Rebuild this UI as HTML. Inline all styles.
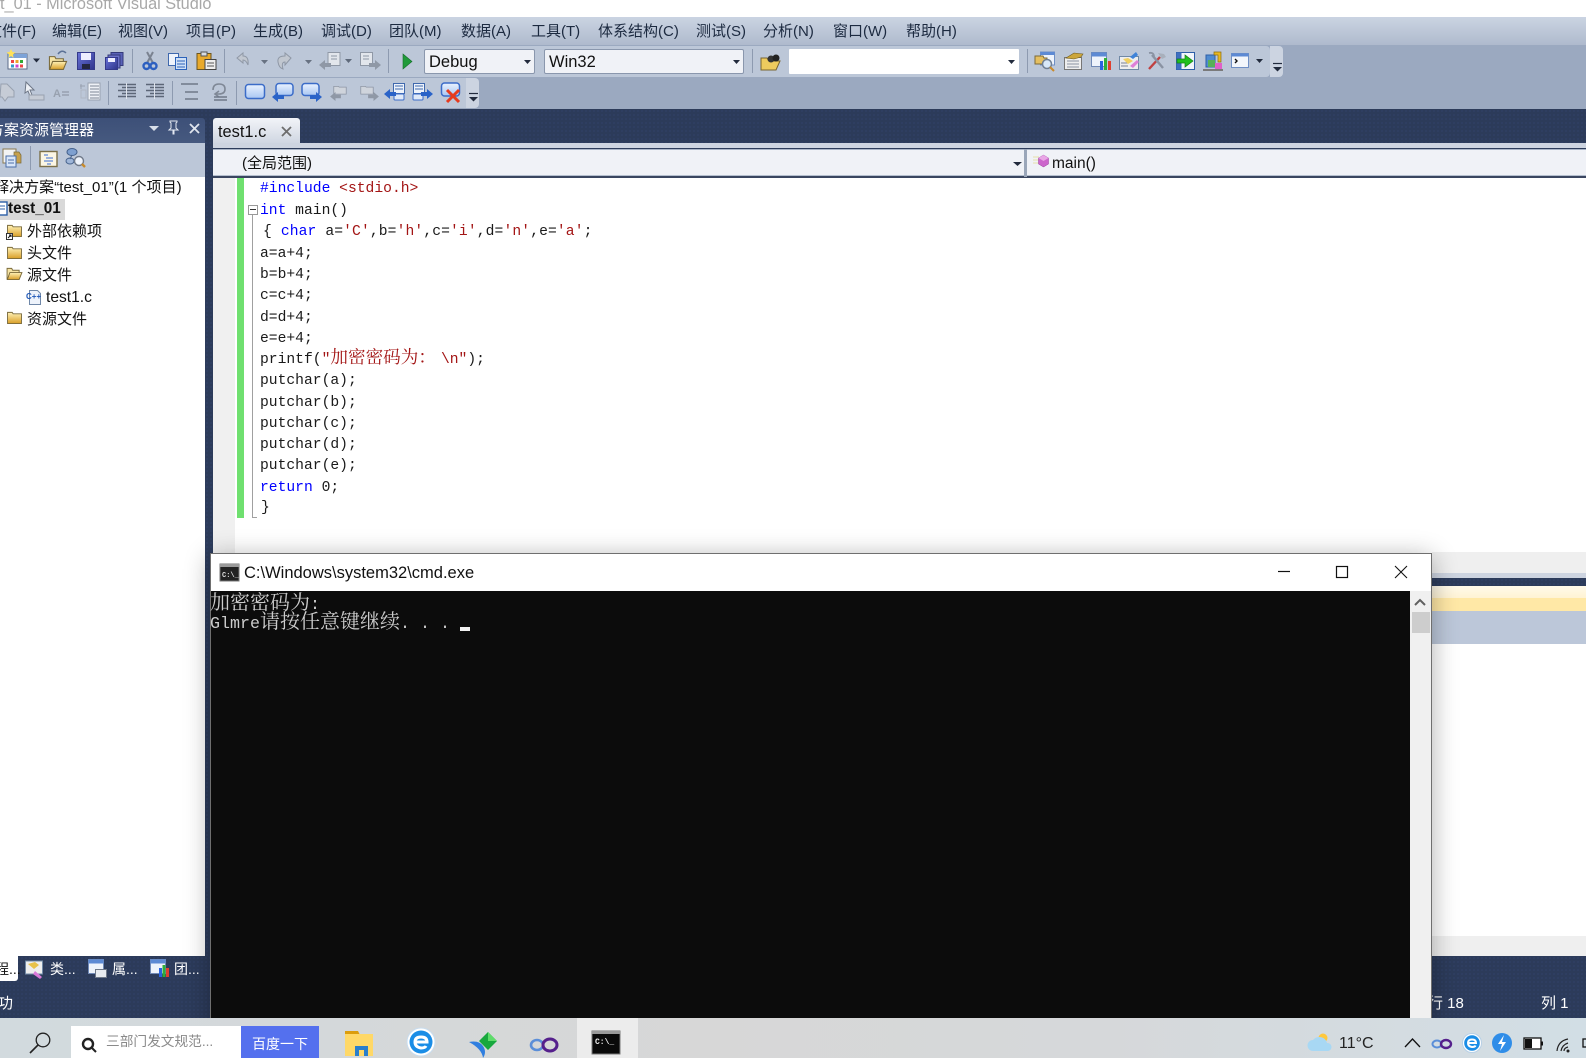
<!DOCTYPE html>
<html><head><meta charset="utf-8"><title>cmd</title>
<style>
html,body{margin:0;padding:0;width:1586px;height:1058px;overflow:hidden;background:#fff}
body{position:relative;font-family:"Liberation Sans","Noto Sans CJK SC",sans-serif}
.b{position:absolute}
.t{position:absolute;white-space:nowrap;line-height:20px;height:20px;font-size:15px;color:#111}
.m{color:#1c2a40;top:22px}
.c{position:absolute;left:260px;white-space:pre;height:21px;line-height:21px;font-family:"Liberation Mono","Noto Serif CJK SC",monospace;font-size:14.67px;color:#1a1a1a}
.c i{font-style:normal;color:#0000ff}
.c u{text-decoration:none;color:#a31515}
.c u b{font-weight:400;font-size:17.6px;font-family:"Noto Serif CJK SC",serif}
.dark{background-color:#2c3b5a;background-image:radial-gradient(#2f3f62 35%,transparent 40%);background-size:4px 4px}
svg{position:absolute;left:0;top:0}
</style></head><body>

<!-- title -->
<div class="t" style="left:0;top:-6px;font-size:16.3px;color:#a8a8a8">t_01 - Microsoft Visual Studio</div>

<!-- menu -->
<div class="b" style="left:0;top:17px;width:1586px;height:28px;background:linear-gradient(#cbd4e2,#afbacd)"></div>
<div class="t m" style="left:-13px">文件(F)</div>
<div class="t m" style="left:52px">编辑(E)</div>
<div class="t m" style="left:118px">视图(V)</div>
<div class="t m" style="left:186px">项目(P)</div>
<div class="t m" style="left:253px">生成(B)</div>
<div class="t m" style="left:321px">调试(D)</div>
<div class="t m" style="left:389px">团队(M)</div>
<div class="t m" style="left:461px">数据(A)</div>
<div class="t m" style="left:531px">工具(T)</div>
<div class="t m" style="left:598px">体系结构(C)</div>
<div class="t m" style="left:696px">测试(S)</div>
<div class="t m" style="left:763px">分析(N)</div>
<div class="t m" style="left:833px">窗口(W)</div>
<div class="t m" style="left:906px">帮助(H)</div>

<!-- toolbars -->
<div class="b" style="left:0;top:45px;width:1586px;height:64px;background:#9ba9c0"></div>
<div class="b" style="left:0;top:46px;width:1270px;height:31px;background:#bcc7d8;border-radius:0 4px 4px 0"></div>
<div class="b" style="left:1270px;top:46px;width:13px;height:31px;background:#ccd4e1;border-radius:0 4px 4px 0"></div>
<div class="b" style="left:0;top:78px;width:466px;height:30px;background:#bcc7d8"></div>
<div class="b" style="left:466px;top:78px;width:13px;height:30px;background:#ccd4e1;border-radius:0 4px 4px 0"></div>

<!-- combos -->
<div class="b" style="left:424px;top:49px;width:111px;height:25px;background:#f0f2f7;box-sizing:border-box;border:1px solid #8a97ad;border-radius:2px"></div>
<div class="t" style="left:429px;top:52px;font-size:16.5px">Debug</div>
<div class="b" style="left:544px;top:49px;width:200px;height:25px;background:#f0f2f7;box-sizing:border-box;border:1px solid #8a97ad;border-radius:2px"></div>
<div class="t" style="left:549px;top:52px;font-size:16.5px">Win32</div>
<div class="b" style="left:789px;top:49px;width:230px;height:25px;background:#fff;border-radius:1px"></div>

<!-- dark band -->
<div class="b dark" style="left:0;top:109px;width:1586px;height:36px"></div>
<div class="b dark" style="left:205px;top:145px;width:8px;height:811px"></div>

<!-- solution explorer -->
<div class="b" style="left:0;top:118px;width:205px;height:25px;background:linear-gradient(#3d5078,#46597f);border-radius:0 3px 0 0"></div>
<div class="t" style="left:-11px;top:121px;color:#fff;font-size:15px">方案资源管理器</div>
<div class="b" style="left:0;top:143px;width:205px;height:34px;background:#bcc7d8"></div>
<div class="b" style="left:0;top:177px;width:205px;height:779px;background:#fff"></div>
<div class="b" style="left:0;top:199px;width:65px;height:21px;background:#d9d9d9"></div>
<div class="t" style="left:-6px;top:178px;letter-spacing:.05px">释决方案“test_01”(1 个项目)</div>
<div class="t" style="left:8px;top:199px;font-weight:700;font-size:15.3px">test_01</div>
<div class="t" style="left:27px;top:222px">外部依赖项</div>
<div class="t" style="left:27px;top:244px">头文件</div>
<div class="t" style="left:27px;top:266px">源文件</div>
<div class="t" style="left:46px;top:288px;font-size:15.6px">test1.c</div>
<div class="t" style="left:27px;top:310px">资源文件</div>

<!-- bottom tabs / status -->
<div class="b dark" style="left:0;top:956px;width:1586px;height:62px"></div>
<div class="b" style="left:0;top:956px;width:18px;height:25px;background:#fff;border-radius:0 0 3px 0"></div>
<div class="t" style="left:-5px;top:959px;font-size:14px">程...</div>
<div class="t" style="left:50px;top:959px;font-size:14px;color:#fff">类...</div>
<div class="t" style="left:112px;top:959px;font-size:14px;color:#fff">属...</div>
<div class="t" style="left:174px;top:959px;font-size:14px;color:#fff">团...</div>
<div class="t" style="left:-2px;top:994px;color:#fff">功</div>
<div class="t" style="left:1428px;top:994px;color:#fff">行 18</div>
<div class="t" style="left:1541px;top:994px;color:#fff">列 1</div>

<!-- doc tab -->
<div class="b" style="left:213px;top:118px;width:87px;height:27px;background:linear-gradient(#f2f4f8,#cdd4e0);border-radius:3px 3px 0 0"></div>
<div class="t" style="left:218px;top:122px;font-size:16.4px">test1.c</div>
<div class="b" style="left:213px;top:143px;width:1373px;height:5px;background:#cdd4e0"></div>
<div class="b" style="left:213px;top:148px;width:1373px;height:30px;background:#f0f2f7;box-sizing:border-box;border-top:1px solid #2c3b5a;border-bottom:2px solid #3a4660;box-shadow:inset 0 1px 0 #a9b4c6,inset 0 -1px 0 #b5bfce"></div>
<div class="b" style="left:1024px;top:149px;width:3px;height:28px;background:#9aa6b9"></div>
<div class="t" style="left:242px;top:154px;font-size:15px">(全局范围)</div>
<div class="t" style="left:1052px;top:154px;font-size:15.5px">main()</div>

<!-- editor -->
<div class="b" style="left:213px;top:178px;width:1373px;height:374px;background:#fff"></div>
<div class="b" style="left:213px;top:178px;width:22px;height:420px;background:#f0f0f0"></div>
<div class="b" style="left:237px;top:178px;width:7px;height:340px;background:#6fe06f"></div>
<div class="b" style="left:248px;top:205px;width:8px;height:8px;border:1px solid #999;background:#fff"></div>
<div class="b" style="left:250px;top:209px;width:6px;height:1px;background:#333"></div>
<div class="b" style="left:252px;top:215px;width:1px;height:302px;background:#a0a0a0"></div>
<div class="b" style="left:252px;top:517px;width:5px;height:1px;background:#a0a0a0"></div>

<div class="c" style="top:179px;left:260px"><i>#include</i> <u>&lt;stdio.h&gt;</u></div>
<div class="c" style="top:201px;left:260px"><i>int</i> main()</div>
<div class="c" style="top:222px;left:263px;letter-spacing:.11px">{ <i>char</i> a=<u>'C'</u>,b=<u>'h'</u>,c=<u>'i'</u>,d=<u>'n'</u>,e=<u>'a'</u>;</div>
<div class="c" style="top:244px">a=a+4;</div>
<div class="c" style="top:265px">b=b+4;</div>
<div class="c" style="top:286px">c=c+4;</div>
<div class="c" style="top:308px">d=d+4;</div>
<div class="c" style="top:329px">e=e+4;</div>
<div class="c" style="top:346px">printf(<u>"<b>加密密码为：</b><span style="padding-left:5px">\n</span>"</u>);</div>
<div class="c" style="top:371px">putchar(a);</div>
<div class="c" style="top:393px">putchar(b);</div>
<div class="c" style="top:414px">putchar(c);</div>
<div class="c" style="top:435px">putchar(d);</div>
<div class="c" style="top:456px">putchar(e);</div>
<div class="c" style="top:478px"><i>return</i> 0;</div>
<div class="c" style="top:498px;left:261px">}</div>

<!-- right of console -->
<div class="b" style="left:1432px;top:552px;width:154px;height:21px;background:#efefef"></div>
<div class="b" style="left:1432px;top:573px;width:154px;height:5px;background:#cdd4e0"></div>
<div class="b dark" style="left:1432px;top:578px;width:154px;height:8px"></div>
<div class="b" style="left:1432px;top:586px;width:154px;height:12px;background:linear-gradient(#fffaea,#fff3d4)"></div>
<div class="b" style="left:1432px;top:598px;width:154px;height:13px;background:#ffe8a6"></div>
<div class="b" style="left:1432px;top:611px;width:154px;height:33px;background:#bcc7d9"></div>
<div class="b" style="left:1432px;top:936px;width:154px;height:20px;background:#efefef"></div>

<!-- VS icons -->
<svg width="1586" height="1058" viewBox="0 0 1586 1058">
<defs>
<linearGradient id="gold" x1="0" y1="0" x2="0" y2="1"><stop offset="0" stop-color="#fff2b8"/><stop offset="1" stop-color="#d99f28"/></linearGradient>
<linearGradient id="blu" x1="0" y1="0" x2="0" y2="1"><stop offset="0" stop-color="#eaf2ff"/><stop offset="1" stop-color="#a9c6f2"/></linearGradient>
<linearGradient id="sav" x1="0" y1="0" x2="1" y2="1"><stop offset="0" stop-color="#6a74d8"/><stop offset="1" stop-color="#2e348c"/></linearGradient>
<symbol id="tri" viewBox="0 0 7 4" overflow="visible"><path d="M0 0h7L3.5 4z" fill="#222b3d"/></symbol>
<symbol id="fd" viewBox="0 0 16 14" overflow="visible"><path d="M.5 1.500h5l1 1.500h9v10.500H.5z" fill="url(#gold)" stroke="#7a6a3a"/></symbol>
<symbol id="fo" viewBox="0 0 17 14" overflow="visible"><path d="M.5 1.500h5l1 2h7v3H4L1 13H.5z" fill="#f6e4a4" stroke="#7a6a3a"/><path d="M3.500 6h13l-3 7.500H.8z" fill="url(#gold)" stroke="#7a6a3a"/></symbol>
<symbol id="gbub" viewBox="0 0 20 18" overflow="visible"><path d="M2 3h6l1 1h9v9H2z" fill="#cfd4dc" stroke="#8d95a3"/></symbol>
<symbol id="lar" viewBox="0 0 12 10" overflow="visible"><path d="M0 5l6-5v3h6v4H6v3z" fill="#2a63c8"/></symbol>
<symbol id="rar" viewBox="0 0 12 10" overflow="visible"><path d="M12 5L6 0v3H0v4h6v3z" fill="#2a63c8"/></symbol>
<symbol id="glar" viewBox="0 0 12 10" overflow="visible"><path d="M0 5l6-5v3h6v4H6v3z" fill="#8f98a6"/></symbol>
<symbol id="grar" viewBox="0 0 12 10" overflow="visible"><path d="M12 5L6 0v3H0v4h6v3z" fill="#8f98a6"/></symbol>
<symbol id="lines" viewBox="0 0 20 16" overflow="visible"><path d="M1 1.500h18M5 4.500h14M1 7.500h18M5 10.500h14M1 13.500h18" stroke="#5c6677" stroke-width="1.600" fill="none"/><path d="M9.500 0v16" stroke="#dfe4ec" stroke-width="1"/></symbol>
<symbol id="ovf" viewBox="0 0 9 9" overflow="visible"><path d="M0 .5h9" stroke="#222b3d" stroke-width="1.200"/><path d="M0 4h9L4.500 8.500z" fill="#222b3d"/></symbol>
</defs>

<!-- row 1 -->
<g>
<rect x="8" y="54" width="19" height="15" fill="#fff" stroke="#5b6b88"/><rect x="8" y="54" width="19" height="4" fill="#7da3d8"/>
<rect x="11" y="60" width="3" height="3" fill="#e44"/><rect x="15.500" y="60" width="3" height="3" fill="#e9a427"/><rect x="20" y="60" width="3" height="3" fill="#3a3"/><rect x="11" y="64.500" width="3" height="3" fill="#39c"/><rect x="15.500" y="64.500" width="3" height="3" fill="#c4c"/><rect x="20" y="64.500" width="3" height="3" fill="#e44"/>
<path d="M11 49l1.500 3 3 .5-2.500 2 .5 3.500-2.500-2-2.500 2 .5-3.500-2.500-2 3-.5z" fill="#ffe15a"/>
<use href="#tri" x="33" y="58.500" width="7" height="4"/>
<use href="#fo" x="48" y="55" width="20" height="15"/><path d="M58 54q4-5 8-1" stroke="#5b7196" stroke-width="1.500" fill="none"/>
<rect x="77.500" y="52.500" width="17" height="17" fill="url(#sav)" stroke="#343a8a"/><rect x="81" y="53" width="10" height="7" fill="#eef"/><rect x="82" y="64" width="8" height="5" fill="#23263f"/>
<rect x="111" y="52.500" width="12" height="13" fill="#5a62b8" stroke="#343a7a"/><rect x="108" y="55" width="12" height="13" fill="#6a70c8" stroke="#343a7a"/><rect x="105.500" y="57.500" width="12" height="12" fill="url(#sav)" stroke="#343a8a"/><rect x="108" y="58" width="7" height="4" fill="#eef"/>
<rect x="132" y="49" width="1" height="24" fill="#8d9ab0"/>
<path d="M147 52l6 11M153 52l-6 11" stroke="#7a8290" stroke-width="2"/><circle cx="146.500" cy="66" r="3" fill="none" stroke="#2c5fc0" stroke-width="2.400"/><circle cx="153.500" cy="66" r="3" fill="none" stroke="#2c5fc0" stroke-width="2.400"/>
<rect x="168.500" y="53.500" width="10" height="12" fill="#eef3fb" stroke="#3f68ad"/><rect x="175.500" y="57.500" width="11" height="12" fill="#cfe0f6" stroke="#2b62ba"/><path d="M177 61h8M177 64h8M177 67h8" stroke="#2b62ba"/>
<rect x="197" y="53.500" width="14" height="16" fill="#e8a92b" stroke="#6b5520"/><rect x="201" y="52" width="6" height="4" fill="#d8dce4" stroke="#555"/><rect x="205" y="59.500" width="11" height="10" fill="#eee" stroke="#444"/><path d="M207 63h7M207 66h7" stroke="#555"/>
<rect x="224" y="49" width="1" height="24" fill="#8d9ab0"/>
<path d="M237 58l6-5v3q6 0 5 9-2-5-5-5v3z" fill="#c1c7d0" stroke="#8f98a6"/><use href="#tri" x="261" y="60" width="7" height="4" opacity=".55"/>
<path d="M291 58l-6-5v3q-8 0-7 6t5 7q-2-7 2-7v3z" fill="#c1c7d0" stroke="#8f98a6"/><use href="#tri" x="305" y="60" width="7" height="4" opacity=".55"/>
<rect x="328" y="52.500" width="12" height="13" fill="#e2e6ec" stroke="#8f98a6"/><path d="M331 56h6M331 59h6" stroke="#8f98a6"/><use href="#glar" x="319" y="60" width="12" height="10"/><use href="#tri" x="345" y="59" width="7" height="4" opacity=".6"/>
<rect x="360.500" y="52.500" width="12" height="13" fill="#e2e6ec" stroke="#8f98a6"/><path d="M363 56h6M363 59h6" stroke="#8f98a6"/><use href="#grar" x="369" y="60" width="12" height="10"/>
<rect x="388" y="49" width="1" height="24" fill="#8d9ab0"/>
<path d="M403 54l9 7.500-9 7.500z" fill="#1f9a3a" stroke="#146d2a" stroke-width=".6"/>
<use href="#tri" x="524" y="60" width="7" height="4"/><use href="#tri" x="733" y="60" width="7" height="4"/><use href="#tri" x="1008" y="60" width="7" height="4"/>
<rect x="752" y="49" width="1" height="24" fill="#8d9ab0"/>
<path d="M761 58h6l2 3h11l-4 9h-15z" fill="#eecb5e" stroke="#786430"/><circle cx="771" cy="59" r="3.500" fill="#333"/><circle cx="776" cy="58" r="3.500" fill="#222"/>
<rect x="1027" y="49" width="1" height="24" fill="#8d9ab0"/>
<rect x="1040.500" y="52" width="14" height="13" fill="#eef3fb" stroke="#6f8fc4"/><rect x="1040.500" y="52" width="14" height="3" fill="#5d8ad4"/><path d="M1035 56h8l1 2h3v6h-12z" fill="#e5bf60" stroke="#7a6a3a"/><circle cx="1047" cy="64" r="4.500" fill="#d8e8f8" stroke="#6f7f94" stroke-width="1.500"/><path d="M1050 67l4 4" stroke="#c98a2a" stroke-width="2"/>
<rect x="1064.500" y="57.500" width="17" height="12" fill="#eee" stroke="#777"/><path d="M1067 61h12M1067 64h12M1067 67h12" stroke="#8a93a3"/><path d="M1066 58l8-5 9 1-2 3-7 2z" fill="#cca63c" stroke="#6d5a20" stroke-width=".6"/>
<rect x="1091.500" y="52.500" width="15" height="14" fill="#eef3fb" stroke="#7089b6"/><rect x="1091.500" y="52.500" width="15" height="4" fill="#5d8ad4"/><rect x="1100" y="61" width="3" height="9" fill="#2a63e0"/><rect x="1104" y="58" width="3" height="12" fill="#2fae3a"/><rect x="1108" y="61" width="3" height="9" fill="#e04030"/>
<rect x="1119.500" y="56.500" width="19" height="13" fill="#eee" stroke="#7089a6"/><path d="M1121 63h7M1121 66h7" stroke="#7a8394"/><path d="M1123 59l5 5 5-3-5-3z" fill="#f0cf60"/><path d="M1130 66l7-6 2 2-6 6z" fill="#e080d8"/><path d="M1130 57l6-5 2 3-5 4z" fill="#3f83d8"/>
<path d="M1149 69l11-12" stroke="#c04040" stroke-width="2.400"/><path d="M1152 55l11 13" stroke="#8a93a3" stroke-width="2.400"/><path d="M1149 53q5-1 5 4" stroke="#8a93a3" stroke-width="1.800" fill="none"/><path d="M1158 53l6 1 2 3-4 2z" fill="#a8b0bc"/>
<rect x="1176.500" y="52.500" width="18" height="17" fill="#f3f6fb" stroke="#2e5fa8"/><rect x="1176.500" y="52.500" width="5" height="17" fill="#3f6fc0"/><path d="M1177 59h8v-4l8 6-8 6v-4h-8z" fill="#22c01e" stroke="#147f14" stroke-width=".7"/>
<rect x="1203" y="69" width="20" height="2" fill="#7a7a7a"/><rect x="1206" y="55" width="9" height="12" fill="#4f8bd0" stroke="#2e5fa8"/><rect x="1208" y="60" width="7" height="7" fill="#58b058"/><path d="M1214 52h7v10h-3v-7h-4z" fill="#e8b820" stroke="#8a6c10" stroke-width=".7"/><rect x="1215" y="63" width="7" height="6" fill="#e060c8"/>
<rect x="1231.500" y="53.500" width="17" height="14" fill="#f3f6fb" stroke="#6f8fc4"/><rect x="1231.500" y="53.500" width="17" height="3" fill="#5d8ad4"/><path d="M1235 59l2 2-2 2" stroke="#111" stroke-width="1.400" fill="none"/>
<use href="#tri" x="1256" y="59" width="7" height="4"/><use href="#ovf" x="1273" y="63" width="9" height="9"/>
</g>

<!-- row 2 -->
<g>
<path d="M1 84h6l7 7v6H8l-3 4-3-4H0z" fill="#c6ccd6" stroke="#98a1af"/>
<path d="M26 82l8 8h-4l2 5-2 1-2-5-3 2z" fill="#eef1f6" stroke="#6d7686"/><rect x="29" y="95" width="15" height="5" fill="#c6ccd6" stroke="#98a1af"/>
<text x="53" y="97" font-family="Liberation Sans" font-size="11" font-weight="700" fill="#98a1af">A</text><path d="M62 92h7M62 95h7" stroke="#98a1af" stroke-width="1.500"/>
<path d="M81 84v5M80 86h5" stroke="#98a1af"/><rect x="88" y="83" width="12" height="17" fill="#eef1f6" stroke="#98a1af"/><path d="M90 86h9M90 89h9M90 92h9M90 95h9M90 98h9" stroke="#7f8896"/><rect x="81" y="90" width="5" height="8" fill="none" stroke="#b0b7c3"/>
<rect x="108" y="81" width="1" height="24" fill="#8d9ab0"/>
<use href="#lines" x="117" y="83" width="20" height="16"/><use href="#lines" x="145" y="83" width="20" height="16"/>
<rect x="172" y="81" width="1" height="24" fill="#8d9ab0"/>
<path d="M181 84h17M185 92h13M185 99h13" stroke="#6f7888" stroke-width="1.600"/>
<path d="M213 90q0-6 6-6t6 5-6 5h-3m3-3l-4 3 4 3" stroke="#7f8896" stroke-width="1.600" fill="none"/><path d="M214 97h13M214 100h13" stroke="#6f7888" stroke-width="1.400"/>
<rect x="236" y="81" width="1" height="24" fill="#8d9ab0"/>
<rect x="245.500" y="84.500" width="19" height="14" rx="3" fill="url(#blu)" stroke="#3b6cc8" stroke-width="1.500"/>
<rect x="276" y="83.500" width="17" height="12" rx="3" fill="url(#blu)" stroke="#3b6cc8" stroke-width="1.500"/><use href="#lar" x="272" y="92" width="12" height="10"/>
<rect x="302" y="83.500" width="17" height="12" rx="3" fill="url(#blu)" stroke="#3b6cc8" stroke-width="1.500"/><use href="#rar" x="310" y="92" width="12" height="10"/>
<use href="#gbub" x="331" y="84" width="18" height="14"/><use href="#glar" x="330" y="92" width="11" height="9"/>
<use href="#gbub" x="358" y="84" width="18" height="14"/><use href="#grar" x="368" y="92" width="11" height="9"/>
<rect x="393.500" y="83.500" width="11" height="10" fill="#eef3fb" stroke="#3f68ad"/><path d="M395 86h8M395 89h8" stroke="#3f68ad"/><rect x="394" y="94" width="10" height="6" rx="1" fill="#dfe9f8" stroke="#3b6cc8"/><use href="#lar" x="384" y="89" width="12" height="10"/>
<rect x="413.500" y="83.500" width="11" height="10" fill="#eef3fb" stroke="#3f68ad"/><path d="M415 86h8M415 89h8" stroke="#3f68ad"/><rect x="413" y="94" width="10" height="6" rx="1" fill="#dfe9f8" stroke="#3b6cc8"/><use href="#rar" x="421" y="89" width="12" height="10"/>
<rect x="441.500" y="83" width="18" height="13" rx="3" fill="url(#blu)" stroke="#3b6cc8" stroke-width="1.500"/><path d="M447 90l12 12M459 90l-12 12" stroke="#e63b1e" stroke-width="3"/>
<use href="#ovf" x="469" y="93" width="9" height="9"/>
</g>

<!-- explorer header + toolbar -->
<path d="M149 126h10l-5 5z" fill="#d8dfea"/>
<path d="M170 121h7v1l-1 1v5l2 2h-4v4h-1v-4h-4l2-2v-5l-1-1z" fill="none" stroke="#e4e9f2"/>
<path d="M190 124l9 9M199 124l-9 9" stroke="#dfe5ee" stroke-width="1.800"/>
<g>
<rect x="3" y="149" width="13" height="14" fill="#f3f3f3" stroke="#8a7a50"/><path d="M14 152h5l2 3v8h-7z" fill="#c6a04c" stroke="#7a6a3a" stroke-width=".7"/><rect x="6" y="156" width="10" height="11" fill="#d9e6f8" stroke="#4a6ea8"/><path d="M8 160h6M8 163h6" stroke="#4a6ea8"/>
<rect x="30" y="146" width="1" height="24" fill="#8d9ab0"/>
<rect x="40" y="151.500" width="17" height="15" fill="#fbf6e4" stroke="#7b6f48" stroke-width="1.400"/><path d="M44 155h4M46 158h7M44 161h9M47 164h4" stroke="#3b6cd0"/>
<ellipse cx="72" cy="152" rx="5" ry="3.500" fill="#7ea0d0" stroke="#46628c"/><ellipse cx="70" cy="161" rx="4" ry="3" fill="#9fb6d8" stroke="#46628c"/><path d="M72 155l-2 4" stroke="#46628c"/><circle cx="79" cy="161" r="4.500" fill="#eef3fb" stroke="#707a8a" stroke-width="1.400"/><path d="M82 164l3 3" stroke="#c98a2a" stroke-width="2.400"/>
</g>
<!-- tree icons -->
<rect x="-2" y="202" width="9" height="13" fill="#fff" stroke="#2c5fa8" stroke-width="1.400"/><path d="M0 206h5M0 209h5" stroke="#2c5fa8"/>
<use href="#fd" x="7" y="224" width="15" height="13"/><rect x="6.500" y="233.500" width="6" height="6" fill="#fff" stroke="#333"/><path d="M8 238l3-3M9 235h2v2" stroke="#111" fill="none"/>
<use href="#fd" x="7" y="246" width="15" height="13"/>
<use href="#fo" x="6" y="267" width="17" height="13"/>
<path d="M29.500 290.500h8l3 3v11h-11z" fill="#eef3fb" stroke="#6f87a8"/><text x="26" y="299" font-family="Liberation Sans" font-size="8" font-weight="700" fill="#1f58b8">C++</text>
<use href="#fd" x="7" y="311" width="15" height="13"/>
<!-- bottom tab icons -->
<rect x="25.500" y="961" width="17" height="13" fill="#eee" stroke="#7089a6"/><path d="M28 964l6 5 5-4-4-3z" fill="#e8c24a"/><path d="M35 971l7 6-2 2-7-5z" fill="#d97ad8"/>
<rect x="88.500" y="959.500" width="15" height="14" fill="#eef3fb" stroke="#7089b6"/><rect x="88.500" y="959.500" width="15" height="4" fill="#5d8ad4"/><rect x="95.500" y="969.500" width="11" height="8" fill="#e8ebf0" stroke="#6f7888"/>
<rect x="150.500" y="959.500" width="15" height="14" fill="#eef3fb" stroke="#7089b6"/><rect x="150.500" y="959.500" width="15" height="4" fill="#5d8ad4"/><rect x="159" y="968" width="3" height="9" fill="#2a63e0"/><rect x="162.500" y="965" width="3" height="12" fill="#2fae3a"/><rect x="166" y="968" width="3" height="9" fill="#e04030"/>
<!-- combo icons -->
<path d="M1013 162h9l-4.500 4z" fill="#222b3d"/>
<path d="M1033 157h6M1033 160h6M1033 163h6" stroke="#e6e0a8"/><path d="M1043.500 155l5 3v6l-5 3-5-3v-6z" fill="#cc66cc" stroke="#9a3fa0" stroke-width=".5"/><path d="M1043.500 155l5 3-5 3-5-3z" fill="#e9a6e6"/>
<!-- doc tab close -->
<path d="M282 127l9 9M291 127l-9 9" stroke="#6d6d6d" stroke-width="1.800"/>
</svg>

<!-- cmd window -->
<div class="b" style="left:210px;top:553px;width:1222px;height:480px;background:#fff;box-sizing:border-box;border:1px solid #6f6f6f;border-bottom:0;box-shadow:0 4px 24px rgba(0,0,0,.32)">
 <div class="b" style="left:0;top:37px;width:1199px;height:440px;background:#0c0c0c"></div>
 <div class="b" style="left:1199px;top:37px;width:21px;height:440px;background:#f0f0f0"></div>
 <div class="b" style="left:1201px;top:58px;width:18px;height:21px;background:#cdcdcd"></div>
 <div class="b" style="left:33px;top:9px;white-space:nowrap;line-height:20px;font-size:16.5px;color:#111">C:\Windows\system32\cmd.exe</div>
 <div class="b" style="left:-1px;top:37px;white-space:pre;height:20px;line-height:20px;font-family:'Liberation Mono','Noto Serif CJK SC',monospace;font-size:16.67px;color:#cccccc"><span style="font-size:20px;font-family:'Noto Serif CJK SC',serif">加密密码为</span>:</div>
 <div class="b" style="left:-1px;top:56px;white-space:pre;height:20px;line-height:20px;font-family:'Liberation Mono','Noto Serif CJK SC',monospace;font-size:16.67px;color:#cccccc">Glmre<span style="font-size:20px;font-family:'Noto Serif CJK SC',serif">请按任意键继续</span>. . .</div>
 <div class="b" style="left:249px;top:73px;width:10px;height:4px;background:#f2f2f2"></div>
 <svg width="1222" height="80" viewBox="0 0 1222 80" style="left:-1px;top:-1px">
  <rect x="10" y="11" width="19" height="17" fill="#222" stroke="#777"/><rect x="10" y="11" width="19" height="3" fill="#9a9a9a"/>
  <text x="12" y="24" font-family="Liberation Mono" font-size="7" font-weight="700" fill="#ddd">C:\_</text>
  <path d="M1068 18.500h12" stroke="#111" stroke-width="1.200"/>
  <rect x="1126.500" y="13.500" width="11" height="11" fill="none" stroke="#111" stroke-width="1.200"/>
  <path d="M1185 13l12 12M1197 13l-12 12" stroke="#111" stroke-width="1.100"/>
  <path d="M1205 52l5-5 5 5" fill="none" stroke="#606060" stroke-width="2"/>
 </svg>
</div>

<!-- taskbar -->
<div class="b" style="left:0;top:1018px;width:1586px;height:40px;background:linear-gradient(90deg,#d2dade 0,#d4d8da 300px,#d7d7d7 700px,#d6d8da 1100px,#d2dee5 1586px)"></div>
<div class="b" style="left:577px;top:1018px;width:61px;height:40px;background:#ececec"></div>
<div class="b" style="left:71px;top:1026px;width:170px;height:32px;background:#fff"></div>
<div class="b" style="left:241px;top:1026px;width:78px;height:32px;background:#5470ee"></div>
<div class="t" style="left:106px;top:1032px;font-size:13.7px;color:#8a8a8a">三部门发文规范...</div>
<div class="t" style="left:252px;top:1034px;font-size:14px;color:#fff">百度一下</div>
<div class="t" style="left:1339px;top:1034px;font-size:16px;color:#222">11°C</div>
<svg width="1586" height="1058" viewBox="0 0 1586 1058">
<!-- search -->
<circle cx="43" cy="1040" r="6.800" fill="none" stroke="#222" stroke-width="1.300"/><path d="M38 1045l-8 8" stroke="#222" stroke-width="1.600"/>
<circle cx="88" cy="1044" r="5" fill="none" stroke="#222" stroke-width="2.400"/><path d="M92 1048l4 4" stroke="#222" stroke-width="2"/>
<!-- folder -->
<path d="M345 1031h13l2 4h-15z" fill="#dc9d0c"/><rect x="345" y="1034" width="28" height="22" fill="#ffd867"/><path d="M355 1056v-10h13v10h-4v-6h-5v6z" fill="#2a7ecb"/>
<!-- edge e -->
<circle cx="421" cy="1042" r="14" fill="#fff" stroke="#c8dcee"/><circle cx="421" cy="1042" r="11.500" fill="#1a8de6"/><path d="M415 1042h12q0-5-6-5t-6 5 6 6q4 0 5-2" fill="none" stroke="#fff" stroke-width="3"/>
<!-- green gem -->
<path d="M488 1032l9 9-9 9-9-9z" fill="#18a83e"/><path d="M488 1032l9 9h-9z" fill="#5fdc6a"/><path d="M469 1042q10-2 14 4t0 12q-1-9-14-16z" fill="#2f7fe0"/>
<!-- infinity -->
<g><ellipse cx="537" cy="1045" rx="6" ry="5" fill="none" stroke="#5b8ed8" stroke-width="2.600"/><ellipse cx="550" cy="1045" rx="7" ry="6" fill="none" stroke="#55208c" stroke-width="3"/></g>
<!-- cmd icon -->
<rect x="592" y="1031" width="28" height="23" fill="#0a0a0a" stroke="#777"/><rect x="592" y="1031" width="28" height="3" fill="#9a9a9a"/><text x="595" y="1044" font-family="Liberation Mono" font-size="8" font-weight="700" fill="#eee">C:\_</text>
<!-- weather -->
<circle cx="1323" cy="1038" r="4.500" fill="#ffc83d"/><path d="M1313 1051a5.500 5.500 0 0 1 0-11 8 8 0 0 1 14 3 4 4 0 0 1 1 8z" fill="#a8d8f4"/>
<!-- tray -->
<path d="M1405 1047l7.500-8 7.500 8" fill="none" stroke="#111" stroke-width="1.300"/>
<ellipse cx="1437" cy="1044" rx="4.500" ry="3.500" fill="none" stroke="#5b8ed8" stroke-width="2"/><ellipse cx="1446" cy="1044" rx="5" ry="4" fill="none" stroke="#55208c" stroke-width="2.400"/>
<circle cx="1472" cy="1043" r="9.500" fill="#fff" stroke="#b8d0e6"/><circle cx="1472" cy="1043" r="7.800" fill="#1a8de6"/><path d="M1468 1043h8q0-3.500-4-3.500t-4 3.500 4 4q3 0 3.500-1.500" fill="none" stroke="#fff" stroke-width="2"/>
<circle cx="1502" cy="1043" r="10" fill="#2f8de8"/><path d="M1504 1035l-6 9h4l-2 7 6-9h-4z" fill="#fff"/>
<rect x="1524" y="1038" width="17" height="11" fill="#fff" stroke="#111" stroke-width="1.300"/><rect x="1525" y="1039" width="7" height="9" fill="#111"/><rect x="1541" y="1041.500" width="2" height="4" fill="#111"/>
<path d="M1557 1051q1-10 11-12M1561 1051q1-6 7-8M1564 1051q0-3 4-4" fill="none" stroke="#222" stroke-width="1.200"/><circle cx="1568" cy="1051" r="1.500" fill="#222"/>
<rect x="1583" y="1039" width="6" height="8" fill="none" stroke="#111" stroke-width="1.300"/>
</svg>
</body></html>
